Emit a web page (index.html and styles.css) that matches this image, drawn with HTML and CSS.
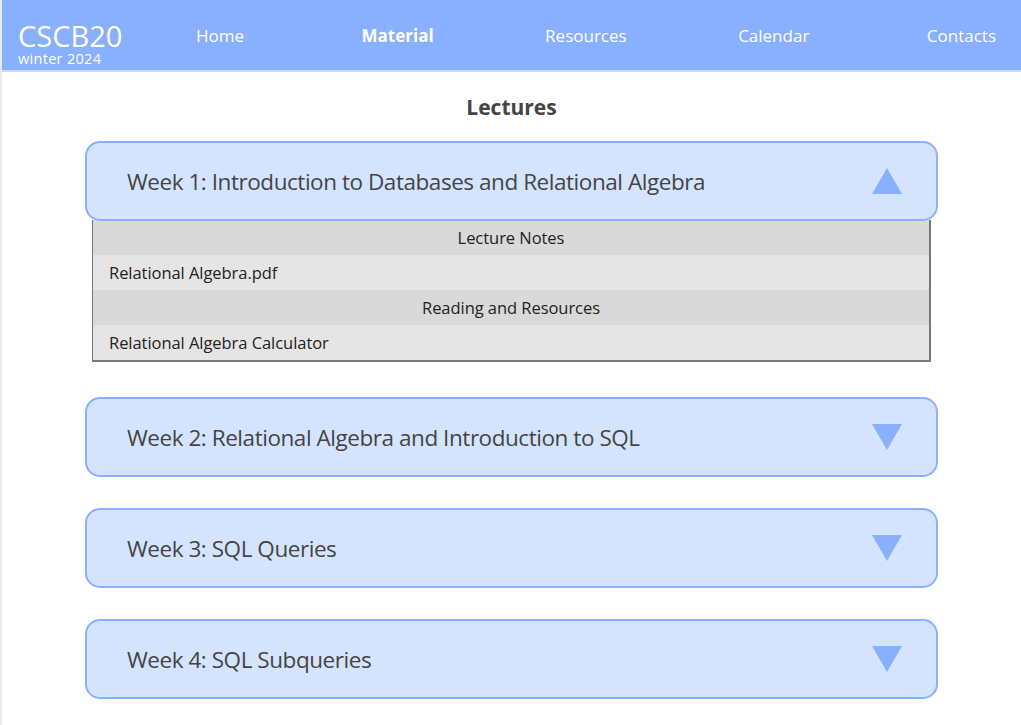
FILE: index.html
```html
<!DOCTYPE html>
<html lang="en">
<head>
<meta charset="utf-8">
<title>CSCB20 - Material</title>
<link rel="stylesheet" href="styles.css">
</head>
<body>
<header class="topbar">
  <div class="brand">
    <div class="brand-title">CSCB20</div>
    <div class="brand-sub">winter 2024</div>
  </div>
  <nav class="nav">
    <a class="nav-link" href="#">Home</a>
    <a class="nav-link active" href="#">Material</a>
    <a class="nav-link" href="#">Resources</a>
    <a class="nav-link cal" href="#">Calendar</a>
    <a class="nav-link" href="#">Contacts</a>
  </nav>
</header>
<main class="main">
  <h1 class="page-title">Lectures</h1>
  <section class="week open">
    <div class="week-head">
      <span class="week-title">Week 1: Introduction to Databases and Relational Algebra</span>
      <span class="tri up"></span>
    </div>
    <div class="week-body">
      <div class="row section">Lecture Notes</div>
      <div class="row item">Relational Algebra.pdf</div>
      <div class="row section">Reading and Resources</div>
      <div class="row item">Relational Algebra Calculator</div>
    </div>
  </section>
  <section class="week">
    <div class="week-head">
      <span class="week-title">Week 2: Relational Algebra and Introduction to SQL</span>
      <span class="tri down"></span>
    </div>
  </section>
  <section class="week">
    <div class="week-head">
      <span class="week-title">Week 3: SQL Queries</span>
      <span class="tri down"></span>
    </div>
  </section>
  <section class="week">
    <div class="week-head">
      <span class="week-title">Week 4: SQL Subqueries</span>
      <span class="tri down"></span>
    </div>
  </section>
</main>
</body>
</html>
```
FILE: styles.css
```css
* { box-sizing: border-box; }
html, body { margin: 0; padding: 0; }
body {
  font-family: "Open Sans", "Noto Sans", sans-serif;
  background: #ffffff;
  border-left: 2px solid #e8e8e8;
  min-height: 725px;
}
.topbar {
  height: 72px;
  background: #88b0fe;
  border-bottom: 2px solid #c9dafd;
  display: flex;
  align-items: stretch;
  color: #ffffff;
}
.brand {
  padding: 21px 0 0 16px;
  width: 180px;
  display: flex;
  flex-direction: column;
}
.brand-title {
  font-size: 29px;
  line-height: 30px;
}
.brand-sub {
  font-size: 14.5px;
  line-height: 15px;
  letter-spacing: 0.3px;
}
.nav {
  flex: 1;
  display: flex;
  align-items: center;
  justify-content: space-between;
  padding: 0 25px 0 14px;
}
.nav-link {
  color: #ffffff;
  text-decoration: none;
  font-size: 17px;
}
.nav-link.active { font-weight: 700; margin-left: 6px; }
.nav-link.cal { margin-right: 6px; }
.main {
  padding: 0 83px 0 83px;
}
.page-title {
  margin: 22px 0 21px;
  text-align: center;
  font-size: 21px;
  line-height: 26px;
  font-weight: 700;
  color: #444444;
}
.week { margin-bottom: 31px; }
.week.open { margin-bottom: 35px; }
.week-head {
  height: 80px;
  background: #d5e4fe;
  border: 2px solid #8ab0fe;
  border-radius: 15px;
  display: flex;
  align-items: center;
  justify-content: space-between;
  padding: 0 34px 0 40px;
  position: relative;
  z-index: 1;
}
.week-title {
  font-size: 22.5px;
  letter-spacing: -0.45px;
  color: #444444;
}
.tri {
  width: 0; height: 0;
  border-left: 15px solid transparent;
  border-right: 15px solid transparent;
}
.tri.up { border-bottom: 26px solid #88b0fe; }
.tri.down { border-top: 26px solid #88b0fe; }
.week-body {
  margin: -1px 7px 0 7px;
  border: 1px solid #777777;
  border-top: none;
  border-right-width: 2px;
  border-bottom-width: 2px;
}
.row {
  height: 35px;
  display: flex;
  align-items: center;
  font-size: 16.5px;
  letter-spacing: -0.05px;
  color: #222222;
}
.row.section {
  background: #d9d9d9;
  justify-content: center;
}
.row.item {
  background: #e5e5e5;
  padding-left: 16px;
}
```
